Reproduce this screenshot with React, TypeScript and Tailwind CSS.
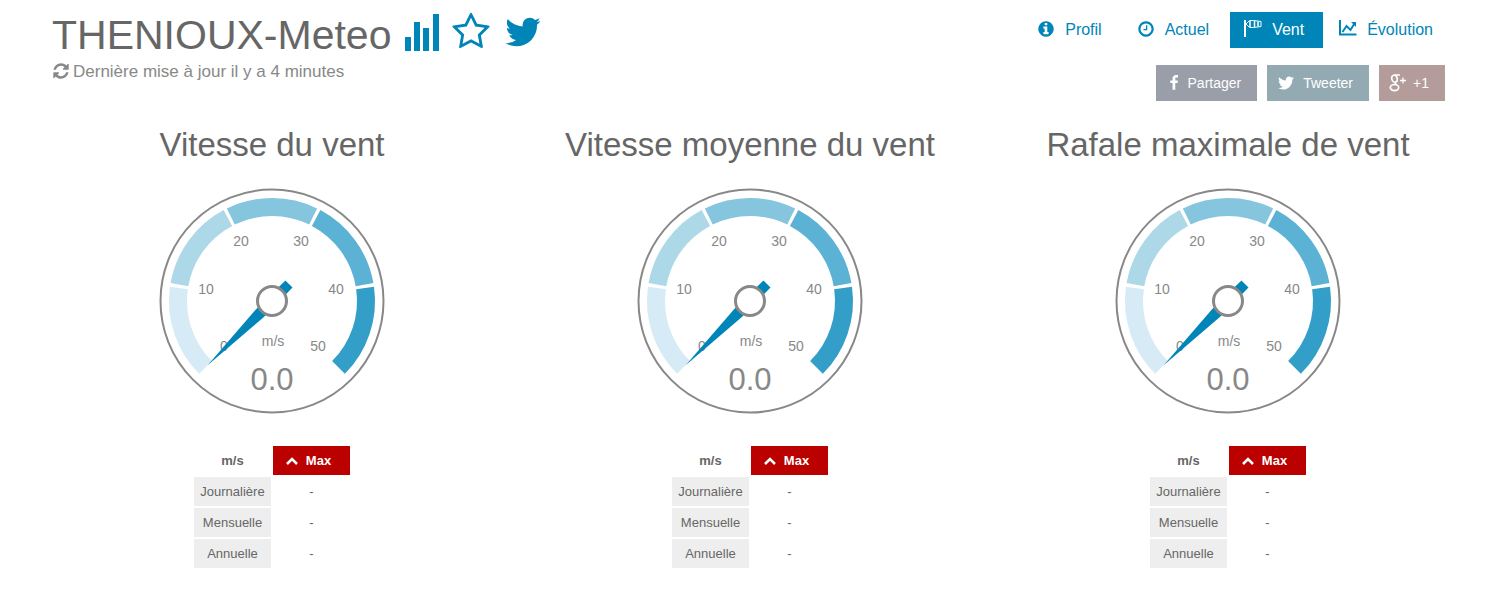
import type { ReactNode } from 'react'

const CIRCLE =
  'M1664 896q0 209-103 385.5t-279.5 279.5-385.5 103-385.5-103-279.5-279.5-103-385.5 103-385.5 279.5-279.5 385.5-103 385.5 103 279.5 279.5 103 385.5z'

const PATHS = {
  twitter:
    'M1684 408q-67 98-162 167 1 14 1 42 0 130-38 259.5t-115.5 248.5-184.5 210.5-258 146-323 54.5q-271 0-496-145 35 4 78 4 225 0 401-138-105-2-188-64.5t-114-159.5q33 5 61 5 43 0 85-11-112-23-185.5-111.5t-73.5-205.5v-4q68 38 146 41-66-44-105-115t-39-154q0-88 44-163 121 149 294.5 238.5t371.5 99.5q-8-38-8-74 0-134 94.5-228.5t228.5-94.5q140 0 236 102 109-21 205-78-37 115-142 178 93-10 186-50z',
  refresh:
    'M1639 1056q0 5-1 7-64 268-268 434.5t-478 166.5q-146 0-282.5-55t-243.5-157l-129 129q-19 19-45 19t-45-19-19-45v-448q0-26 19-45t45-19h448q26 0 45 19t19 45-19 45l-137 137q71 66 161 102t187 36q134 0 250-65t186-179q11-17 53-117 8-23 30-23h192q13 0 22.5 9.5t9.5 22.5zm25-800v448q0 26-19 45t-45 19h-448q-26 0-45-19t-19-45 19-45l138-138q-148-137-349-137-134 0-250 65t-186 179q-11 17-53 117-8 23-30 23h-199q-13 0-22.5-9.5t-9.5-22.5v-7q65-268 270-434.5t480-166.5q146 0 284 55.5t245 156.5l130-129q19-19 45-19t45 19 19 45z',
  star: 'M1201 1004l306-297-422-62-189-382-189 382-422 62 306 297-73 421 378-199 377 199zm527-357q0 22-26 48l-363 354 86 500q1 7 1 20 0 50-41 50-19 0-40-12l-449-236-449 236q-22 12-40 12-21 0-31.5-14.5t-10.5-35.5q0-6 2-20l86-500-364-354q-25-27-25-48 0-37 56-46l502-73 225-455q19-41 49-41t49 41l225 455 502 73q56 9 56 46z',
  clock:
    'M1024 544v448q0 14-9 23t-23 9h-320q-14 0-23-9t-9-23v-64q0-14 9-23t23-9h224v-352q0-14 9-23t23-9h64q14 0 23 9t9 23zM1440 896q0-148-73-273t-198-198-273-73-273 73-198 198-73 273 73 273 198 198 273 73 273-73 198-198 73-273z' + CIRCLE,
  info:
    'M1152 1376v-160q0-14-9-23t-23-9h-96v-512q0-14-9-23t-23-9h-320q-14 0-23 9t-9 23v160q0 14 9 23t23 9h96v320h-96q-14 0-23 9t-9 23v160q0 14 9 23t23 9h448q14 0 23-9t9-23zM1024 480v-160q0-14-9-23t-23-9h-192q-14 0-23 9t-9 23v160q0 14 9 23t23 9h192q14 0 23-9t9-23z' + CIRCLE,
  facebook:
    'M1343 12v264h-157q-86 0-116 36t-30 108v189h293l-39 296h-254v759h-306v-759h-255v-296h255v-218q0-186 104-288.5t277-102.5q147 0 228 12z',
}

function Icon({ name, className }: { name: keyof typeof PATHS; className: string }) {
  return (
    <svg viewBox="0 0 1792 1792" fill="currentColor" fillRule="evenodd" className={className} aria-hidden="true">
      <path d={PATHS[name]} />
    </svg>
  )
}

function BarsIcon() {
  return (
    <svg viewBox="0 0 34 38" fill="currentColor" className="h-[38px] w-[34px]" aria-hidden="true">
      <path d="M0 24h6v14H0zM9 9h6v29H9zM18 15h6v23h-6zM28 1h6v37h-6z" />
    </svg>
  )
}

function WindsockIcon() {
  return (
    <svg viewBox="0 0 18 18" fill="none" stroke="currentColor" className="mb-1 h-[18px] w-[18px]" aria-hidden="true">
      <path d="M1 1v17" strokeWidth="2" />
      <path d="M2 5l3.500-3.500h4l7.500 1v5l-7.500 1h-4z" />
      <path d="M6 2v6M10.500 2v6M14 2.500v5" strokeWidth="1.500" />
    </svg>
  )
}

function ChartIcon() {
  return (
    <svg viewBox="0 0 18 16" fill="none" stroke="currentColor" className="mb-1 h-4 w-[18px]" aria-hidden="true">
      <path d="M1 0v14.500h16.500" strokeWidth="2" />
      <path d="M3.500 12l4-6 4 4 4-6.500" strokeWidth="2" />
      <path d="M12 2h5v5z" fill="currentColor" stroke="none" />
    </svg>
  )
}

function GooglePlusIcon() {
  return (
    <svg viewBox="0 0 18 18" fill="none" stroke="currentColor" className="mr-[6px] h-[18px] w-[18px]" aria-hidden="true">
      <ellipse cx="5.500" cy="4.700" rx="2.700" ry="3.600" strokeWidth="1.700" transform="rotate(-15 5.500 4.700)" />
      <path d="M11 1H6M6 8.500q0 1.200 1.500 2" strokeWidth="1.600" />
      <ellipse cx="5.500" cy="13.600" rx="4.200" ry="3.100" strokeWidth="1.700" />
      <path d="M11 6.500h6M14 3.500v6" strokeWidth="1.300" />
    </svg>
  )
}

const NAV = [
  { label: 'Profil', icon: <Icon name="info" className="mb-0.5 size-[18px]" />, active: false },
  { label: 'Actuel', icon: <Icon name="clock" className="mb-0.5 size-[18px]" />, active: false },
  { label: 'Vent', icon: <WindsockIcon />, active: true },
  { label: 'Évolution', icon: <ChartIcon />, active: false },
]

function ShareButton({ color, icon, children }: { color: string; icon: ReactNode; children: ReactNode }) {
  return (
    <button type="button" className={`flex h-9 items-center pr-4 pl-[10px] text-sm text-white ${color}`}>
      {icon}
      {children}
    </button>
  )
}

// Point on the dial, with 0° at the top and angles going clockwise
function polar(radius: number, degrees: number) {
  const a = (degrees * Math.PI) / 180
  return `${113 + radius * Math.sin(a)} ${113 - radius * Math.cos(a)}`
}

function band(from: number, to: number) {
  return `M${polar(103, from)}A103 103 0 0 1 ${polar(103, to)}L${polar(85, to)}A85 85 0 0 0 ${polar(85, from)}Z`
}

const BANDS = ['#d6ebf5', '#add8e8', '#85c5de', '#5cb2d5', '#339fc9']

const TICKS = [
  { value: 0, x: 65, y: 163 },
  { value: 10, x: 47, y: 106 },
  { value: 20, x: 82, y: 58 },
  { value: 30, x: 142, y: 58 },
  { value: 40, x: 177, y: 106 },
  { value: 50, x: 159, y: 163 },
]

function Gauge({ value }: { value: number }) {
  return (
    <svg viewBox="0 0 226 226" className="h-[226px] w-[226px]" role="img" aria-label={`${value.toFixed(1)} m/s`}>
      <circle cx="113" cy="113" r="111.500" fill="white" stroke="#888" strokeWidth="2" />
      {BANDS.map((color, i) => (
        <path key={color} d={band(-135 + i * 54 + (i > 0 ? 1 : 0), -81 + i * 54 - (i < 4 ? 1 : 0))} fill={color} />
      ))}
      <g fill="#888" textAnchor="middle" className="text-[14px]">
        {TICKS.map((tick) => (
          <text key={tick.value} x={tick.x} y={tick.y}>{tick.value}</text>
        ))}
        <text x="114" y="158">m/s</text>
        <text x="113" y="202" className="text-[31px]">{value.toFixed(1)}</text>
      </g>
      <path
        d="M113 22L118.500 96L118 137H108L107.500 96Z"
        fill="#0085b8"
        transform={`rotate(${-135 + value * 5.4} 113 113)`}
      />
      <circle cx="113" cy="113" r="14.500" fill="white" stroke="#888" strokeWidth="3" />
    </svg>
  )
}

function WindPanel({ title }: { title: string }) {
  return (
    <section className="flex flex-col items-center">
      <h2 className="text-[33px] leading-10 whitespace-nowrap">{title}</h2>
      <div className="mt-[23px]">
        <Gauge value={0} />
      </div>
      <table className="mt-[30px] w-40 table-fixed border-separate border-spacing-[2px] text-center text-[13px]">
        <thead>
          <tr className="h-[29px]">
            <th scope="col">m/s</th>
            <th scope="col" className="bg-[#b00] text-white">
              <span className="flex items-center justify-center gap-2 pr-[6px]">
                <svg viewBox="0 0 12 8" className="h-2 w-3" fill="none" stroke="currentColor" strokeWidth="2.500" aria-hidden="true">
                  <path d="M1 7l5-5 5 5" />
                </svg>
                Max
              </span>
            </th>
          </tr>
        </thead>
        <tbody>
          {['Journalière', 'Mensuelle', 'Annuelle'].map((period) => (
            <tr key={period} className="h-[29px]">
              <th scope="row" className="bg-[#eee] font-normal">{period}</th>
              <td>-</td>
            </tr>
          ))}
        </tbody>
      </table>
    </section>
  )
}

export default function App() {
  return (
    <div className="bg-white font-['Liberation_Sans',Arial,sans-serif] text-[#666]">
      <header className="flex items-start justify-between px-[52px] pt-3">
        <div>
          <div className="flex items-start">
            <h1 className="text-[41px] leading-[46px]">THENIOUX-Meteo</h1>
            <div className="ml-[14px] flex items-center gap-3 text-[#0085b8]">
              <a href="#stats" aria-label="Statistiques"><BarsIcon /></a>
              <a href="#favori" aria-label="Favori"><Icon name="star" className="size-10" /></a>
              <a href="#twitter" aria-label="Twitter"><Icon name="twitter" className="size-10" /></a>
            </div>
          </div>
          <p className="mt-[2px] flex items-center gap-[3px] text-[17px] leading-6 text-[#888]">
            <Icon name="refresh" className="mb-0.5 size-[18px]" />
            Dernière mise à jour il y a 4 minutes
          </p>
        </div>
        <div className="flex flex-col items-end gap-[17px]">
          <nav className="flex gap-0.5">
            {NAV.map((item) => (
              <a
                key={item.label}
                href={`#${item.label}`}
                className={`flex h-9 items-center gap-[10px] pr-[19px] pl-[14px] last:pr-3 ${item.active ? 'bg-[#0085b8] text-white' : 'text-[#0085b8]'}`}
              >
                {item.icon}
                {item.label}
              </a>
            ))}
          </nav>
          <div className="flex gap-[10px]">
            <ShareButton color="bg-[#999ea8]" icon={<Icon name="facebook" className="mr-[6px] size-4" />}>Partager</ShareButton>
            <ShareButton color="bg-[#93aab3]" icon={<Icon name="twitter" className="mr-2 size-[18px]" />}>Tweeter</ShareButton>
            <ShareButton color="bg-[#b39c9a]" icon={<GooglePlusIcon />}>+1</ShareButton>
          </div>
        </div>
      </header>
      <main className="mt-6 grid grid-cols-3 pr-[30px] pl-[33px]">
        <WindPanel title="Vitesse du vent" />
        <WindPanel title="Vitesse moyenne du vent" />
        <WindPanel title="Rafale maximale de vent" />
      </main>
    </div>
  )
}
